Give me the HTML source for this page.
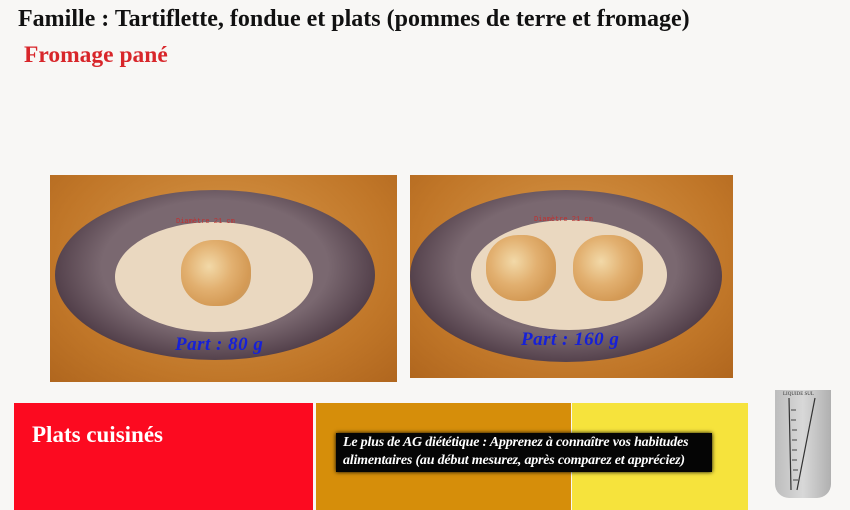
<!DOCTYPE html>
<html><head><meta charset="utf-8"><style>
body{margin:0;width:850px;height:510px;background:#f8f7f5;position:relative;overflow:hidden;font-family:"Liberation Serif",serif}
.a{position:absolute;white-space:nowrap}
.t1{left:18px;top:6px;font-size:24px;font-weight:bold;color:#111}
.t2{left:24px;top:42px;font-size:23.5px;font-weight:bold;color:#d8262a}
.wood{background:radial-gradient(ellipse at 50% 40%,#d99a4c,#c07628 70%,#b0661e);filter:blur(0.3px)}
.pl{border-radius:50%}
.food{border-radius:46%;background:radial-gradient(circle at 40% 40%,#f2d9a8,#e2b070 40%,#d49a55 70%,#b99a70);}
.part{font-size:19px;font-weight:bold;font-style:italic;color:#1620d8;letter-spacing:0.5px}
.rim{background:radial-gradient(ellipse at 50% 45%,#7a6870 50%,#4d3a45 75%,#33232d)}
</style></head><body>
<div class="a t1">Famille : Tartiflette, fondue et plats (pommes de terre et fromage)</div>
<div class="a t2">Fromage pané</div>

<div class="a wood" style="left:50px;top:175px;width:347px;height:207px"></div>
<div class="a pl rim" style="left:55px;top:190px;width:320px;height:170px"></div>
<div class="a pl" style="left:115px;top:222px;width:198px;height:110px;background:#ead8c0"></div>
<div class="a" style="left:176px;top:218px;font-size:7px;color:#c03030;font-family:'Liberation Mono',monospace">Diamètre 21 cm</div>
<div class="a food" style="left:181px;top:240px;width:70px;height:66px"></div>
<div class="a part" style="left:175px;top:334px">Part : 80 g</div>

<div class="a wood" style="left:410px;top:175px;width:323px;height:203px"></div>
<div class="a pl rim" style="left:410px;top:190px;width:312px;height:172px"></div>
<div class="a pl" style="left:471px;top:220px;width:196px;height:110px;background:#ead8c0"></div>
<div class="a" style="left:534px;top:216px;font-size:7px;color:#c03030;font-family:'Liberation Mono',monospace">Diamètre 21 cm</div>
<div class="a food" style="left:486px;top:235px;width:70px;height:66px"></div>
<div class="a food" style="left:573px;top:235px;width:70px;height:66px"></div>
<div class="a part" style="left:521px;top:329px">Part : 160 g</div>

<div class="a" style="left:14px;top:403px;width:299px;height:107px;background:#fc0a20"></div>
<div class="a" style="left:316px;top:403px;width:255px;height:107px;background:#d68e0a"></div>
<div class="a" style="left:572px;top:403px;width:176px;height:107px;background:#f6e33c"></div>
<div class="a" style="left:32px;top:422px;font-size:23px;font-weight:bold;color:#fff">Plats cuisinés</div>
<div class="a" style="left:336px;top:433px;width:376px;height:39px;background:#050505;box-shadow:0 0 4px #000"></div>
<div class="a" style="left:343px;top:434px;font-size:14px;font-style:italic;font-weight:bold;color:#fff;line-height:18px;letter-spacing:-0.2px">Le plus de AG diététique : Apprenez à connaître vos habitudes<br>alimentaires (au début mesurez, après comparez et appréciez)</div>
<div class="a" style="left:775px;top:390px;width:56px;height:108px;background:linear-gradient(90deg,#bdbdbd,#d8d8d8 50%,#b0b0b0);border-radius:0 0 14px 14px"></div>
<svg class="a" style="left:775px;top:390px" width="60" height="110"><text x="8" y="5" font-size="5" fill="#333">LIQUIDE SUL</text><path d="M14 8 L16 100 M40 8 L22 100" stroke="#333" stroke-width="1.2"/><g stroke="#444"><path d="M16 20h5M16 30h5M17 40h5M17 50h5M17 60h5M17 70h5M18 80h5M18 90h5"/></g></svg>
</body></html>
